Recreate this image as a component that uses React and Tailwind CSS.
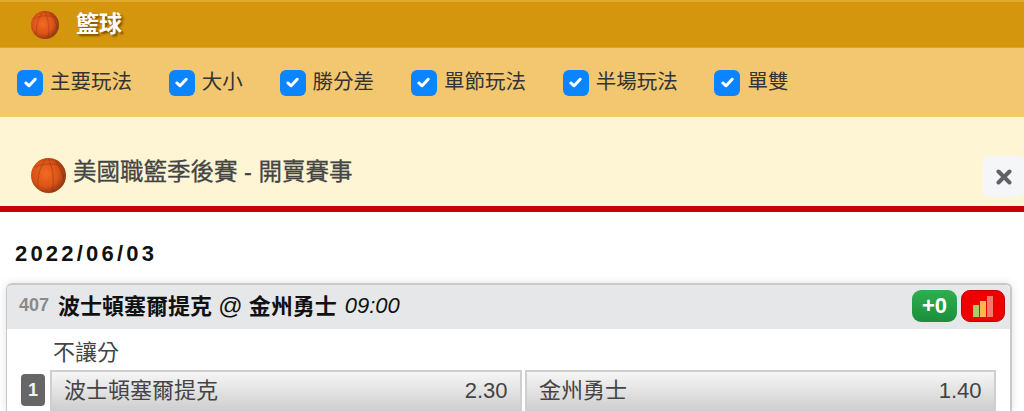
const cjk = '"Liberation Sans", "Noto Sans CJK TC", sans-serif';

const filters = ['主要玩法', '大小', '勝分差', '單節玩法', '半場玩法', '單雙'];

const Ball = ({ id, className }) => (
  <svg viewBox="0 0 40 40" className={className}>
    <defs>
      <radialGradient id={id} cx="42%" cy="45%" r="60%">
        <stop offset="0%" stopColor="#f26a22" />
        <stop offset="60%" stopColor="#dc5418" />
        <stop offset="100%" stopColor="#8a3410" />
      </radialGradient>
    </defs>
    <circle cx="20" cy="20" r="20" fill={`url(#${id})`} />
    <g fill="none" stroke="#6e2a0c" strokeWidth="0.8" opacity="0.5">
      <path d="M4 11 C12 6 26 5 36 10" />
      <path d="M17 1 C10 10 7 22 8 33" />
      <path d="M20 1 C25 12 27 26 24 39" />
      <path d="M28 3 C33 10 37 18 38 26" />
    </g>
  </svg>
);

const Check = () => (
  <span className="flex h-[26px] w-[26px] shrink-0 items-center justify-center rounded-[6px] bg-[#0a84ff]">
    <svg viewBox="0 0 16 16" className="h-[15px] w-[15px]" fill="none" stroke="#ffffff" strokeWidth="3.2" strokeLinecap="round" strokeLinejoin="round">
      <path d="M3 8.5 L6.5 11.5 L13 4.5" />
    </svg>
  </span>
);

const Odds = ({ name, price, className }) => (
  <div className={`flex h-[42px] items-start justify-between border-t-2 border-l-2 border-r-2 border-[#cfcfcf] bg-gradient-to-b from-[#f6f6f6] to-[#cdcdcd] pt-[5px] pl-[12px] pr-[12.5px] text-[22px] leading-[28px] text-[#444444] ${className}`}>
    <span>{name}</span>
    <span>{price}</span>
  </div>
);

export default function App() {
  return (
    <div className="h-[411px] w-[1024px] overflow-hidden bg-white" style={{ fontFamily: cjk }}>
      <div className="flex h-[48px] items-center border-t-2 border-b border-t-[#e0a92c] border-b-[#dda624] bg-[#d4960c] pl-[31px]">
        <Ball id="ballTop" className="h-[28px] w-[28px]" />
        <span className="ml-[17px] text-[23px] font-bold leading-none text-white [text-shadow:2px_2px_2px_rgba(90,50,0,0.7)]">籃球</span>
      </div>

      <div className="flex h-[69px] items-center gap-[36.8px] bg-[#f3c76f] pl-[17px]">
        {filters.map((label) => (
          <div key={label} className="flex items-center gap-[7px]">
            <Check />
            <span className="text-[20.5px] leading-none text-[#333333]">{label}</span>
          </div>
        ))}
      </div>

      <div className="relative flex h-[89px] items-center bg-[#fdf5d3] pt-[26px] pl-[31px]">
        <Ball id="ballNotice" className="mt-[2px] h-[35px] w-[35px]" />
        <span className="-mt-[3px] ml-[7px] text-[23.5px] leading-none text-[#444444] [-webkit-text-stroke:0.3px_#444444]">美國職籃季後賽 - 開賣賽事</span>
        <button className="absolute right-0 top-[39px] flex h-[41px] w-[41px] items-center justify-center rounded-[6px] bg-[#f5f6f8]">
          <svg viewBox="0 0 16 16" className="h-[16px] w-[16px]" stroke="#5f6266" strokeWidth="4" strokeLinecap="round">
            <path d="M2.5 2.5 L13.5 13.5 M13.5 2.5 L2.5 13.5" />
          </svg>
        </button>
      </div>
      <div className="h-[6px] bg-[#c80000]" />

      <div className="pl-[15px] pt-[30px] text-[22px] font-bold leading-[24px] tracking-[3.2px] text-[#111111]">2022/06/03</div>

      <div className="ml-[6px] mt-[17px] w-[1006px] rounded-t-[6px] border-t-2 border-r-2 border-l border-[#c9c9c9] shadow-[0_0_8px_rgba(0,0,0,0.12)]">
        <div className="flex h-[44px] items-center rounded-t-[5px] bg-[#e6e7e9] pl-[12px] pr-[5px]">
          <span className="-mt-[3px] text-[18px] font-bold text-[#8a8a8a]">407</span>
          <span className="-mt-[3px] ml-[9px] text-[22px] font-semibold leading-none text-[#111111]">
            波士頓塞爾提克 <span className="text-[24px] font-normal">@</span> 金州勇士
          </span>
          <span className="-mt-[3px] ml-[8px] text-[22px] italic leading-none text-[#111111]">09:00</span>
          <span className="-mt-[3px] ml-auto flex h-[32px] w-[45px] items-center justify-center rounded-[9px] bg-gradient-to-b from-[#2fae4f] to-[#1b8f3d] text-[22px] font-bold text-white">+0</span>
          <span className="-mt-[3px] ml-[4px] flex h-[32px] w-[44px] items-center justify-center rounded-[9px] border border-[#c40000] bg-[#ef0000]">
            <svg viewBox="0 0 24 24" className="h-[26px] w-[24px]">
              <rect x="2" y="11" width="6" height="12" fill="#a8cf6a" />
              <rect x="9" y="7" width="6" height="16" fill="#ffb84d" />
              <rect x="16" y="2" width="6" height="21" fill="#f47a6e" />
            </svg>
          </span>
        </div>
        <div className="bg-white pl-[14px] pr-[14px]">
          <div className="pl-[32px] pt-[10px] text-[22px] leading-[28px] text-[#444444]">不讓分</div>
          <div className="mt-[3px] flex items-start">
            <span className="mt-[4px] flex h-[32px] w-[24px] shrink-0 items-center justify-center rounded-[4px] bg-[#666666] text-[18px] font-bold text-[#f2f2f2]">1</span>
            <Odds name="波士頓塞爾提克" price="2.30" className="ml-[5px] w-[472px]" />
            <Odds name="金州勇士" price="1.40" className="ml-[3px] w-[471px]" />
          </div>
        </div>
      </div>
    </div>
  );
}
